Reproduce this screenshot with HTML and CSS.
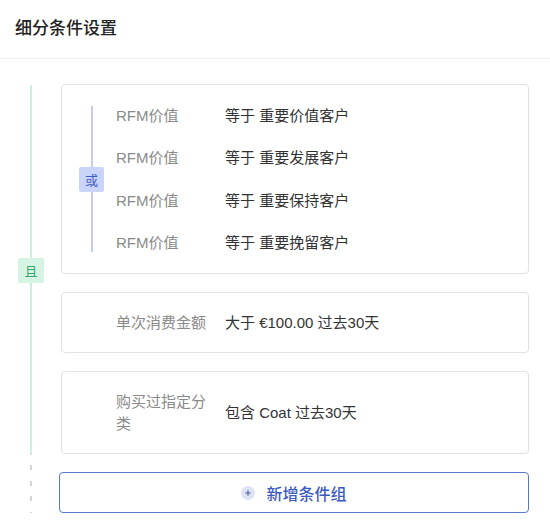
FILE: index.html
```html
<!DOCTYPE html>
<html lang="zh-CN">
<head>
<meta charset="utf-8">
<title>细分条件设置</title>
<link rel="stylesheet" href="styles.css">
</head>
<body>
<div class="page">
  <header class="header">
    <h1 class="title">细分条件设置</h1>
  </header>
  <main class="content">
    <div class="group-row">
      <div class="and-rail">
        <span class="rail-line and-line"></span>
        <span class="badge and-badge">且</span>
        <span class="rail-line and-line"></span>
      </div>
      <div class="cards">
        <div class="card card-or">
          <div class="or-rail">
            <span class="rail-line or-line"></span>
            <span class="badge or-badge">或</span>
            <span class="rail-line or-line"></span>
          </div>
          <div class="or-rows">
            <div class="cond-row"><span class="label">RFM价值</span><span class="value">等于 重要价值客户</span></div>
            <div class="cond-row"><span class="label">RFM价值</span><span class="value">等于 重要发展客户</span></div>
            <div class="cond-row"><span class="label">RFM价值</span><span class="value">等于 重要保持客户</span></div>
            <div class="cond-row"><span class="label">RFM价值</span><span class="value">等于 重要挽留客户</span></div>
          </div>
        </div>
        <div class="card card-single">
          <div class="cond-row"><span class="label">单次消费金额</span><span class="value">大于 €100.00 过去30天</span></div>
        </div>
        <div class="card card-single">
          <div class="cond-row"><span class="label">购买过指定分类</span><span class="value">包含 Coat 过去30天</span></div>
        </div>
      </div>
    </div>
    <div class="add-row">
      <div class="dash-rail"></div>
      <button class="add-btn" type="button">
        <svg class="plus-icon" width="14" height="14" viewBox="0 0 14 14" aria-hidden="true">
          <circle cx="7" cy="7" r="7" fill="#dde4f6"/>
          <path d="M7 4.2v5.6M4.2 7h5.6" stroke="#4f64a8" stroke-width="1.2" fill="none"/>
        </svg>
        <span>新增条件组</span>
      </button>
    </div>
  </main>
</div>
</body>
</html>
```

FILE: styles.css
```css
* { box-sizing: border-box; }

html, body {
  margin: 0;
  padding: 0;
  background: #ffffff;
}

body {
  font-family: "Liberation Sans", "Noto Sans CJK SC", sans-serif;
  color: #333333;
  width: 550px;
  height: 529px;
  overflow: hidden;
}

.header {
  height: 59px;
  border-bottom: 1px solid #efefef;
  display: flex;
  align-items: center;
  padding-left: 15px;
}

.title {
  margin: 0;
  font-size: 17px;
  font-weight: 500;
  color: #222222;
  line-height: 24px;
}

.content {
  padding-top: 25px;
  padding-right: 21px;
}

.group-row {
  display: flex;
}

.and-rail {
  width: 61px;
  display: flex;
  flex-direction: column;
  align-items: center;
  padding-left: 1px;
  padding-top: 1px;
  margin-bottom: -1px;
}

.rail-line {
  display: block;
  width: 2px;
  flex: 1;
}

.and-line { background: #c9f0da; }

.badge {
  display: flex;
  align-items: center;
  justify-content: center;
  font-family: "Noto Sans CJK SC", sans-serif;
  font-size: 13px;
  line-height: 1;
  border-radius: 2px;
}

.and-badge {
  width: 26px;
  height: 25px;
  background: #d5f4e3;
  color: #3aa56d;
}

.cards {
  flex: 1;
  display: flex;
  flex-direction: column;
  gap: 18px;
}

.card {
  border: 1px solid #e2e2e2;
  border-radius: 4px;
  background: #ffffff;
}

.card-or {
  display: flex;
  padding: 10px 0 9px;
}

.or-rail {
  width: 25px;
  margin: 0 12px 0 17px;
  padding: 11px 0 12px;
  display: flex;
  flex-direction: column;
  align-items: center;
  flex: none;
}

.or-line { background: #c4ccef; }

.or-badge {
  width: 25px;
  height: 25px;
  background: #c9d4f8;
  color: #3e5cc4;
}

.or-rows {
  flex: 1;
  display: flex;
  flex-direction: column;
}

.cond-row {
  display: flex;
  align-items: center;
  font-size: 15px;
  line-height: 22px;
}

.card-or .cond-row {
  height: 42.25px;
}

.card-single {
  padding: 18.5px 0 18.5px 54px;
}

.label {
  width: 96px;
  margin-right: 13px;
  flex: none;
  color: #8a8a8a;
}

.value {
  color: #333333;
}

.add-row {
  display: flex;
  padding-top: 8px;
  padding-bottom: 30px;
}

.dash-rail {
  width: 61px;
  flex: none;
  background-image: repeating-linear-gradient(to bottom, #d4d4d4 0, #d4d4d4 5px, transparent 5px, transparent 15.6px);
  background-size: 2px 100%;
  background-repeat: no-repeat;
  background-position: 30px 3px;
  margin-right: -2px;
}

.add-btn {
  flex: 1;
  margin-top: 10px;
  height: 41px;
  border: 1px solid #5877cf;
  border-radius: 4px;
  background: #ffffff;
  display: flex;
  align-items: center;
  justify-content: center;
  gap: 11px;
  font-family: "Noto Sans CJK SC", sans-serif;
  font-size: 16px;
  font-weight: 500;
  color: #3c5cc0;
  padding: 0;
}

.plus-icon { display: block; }
```
